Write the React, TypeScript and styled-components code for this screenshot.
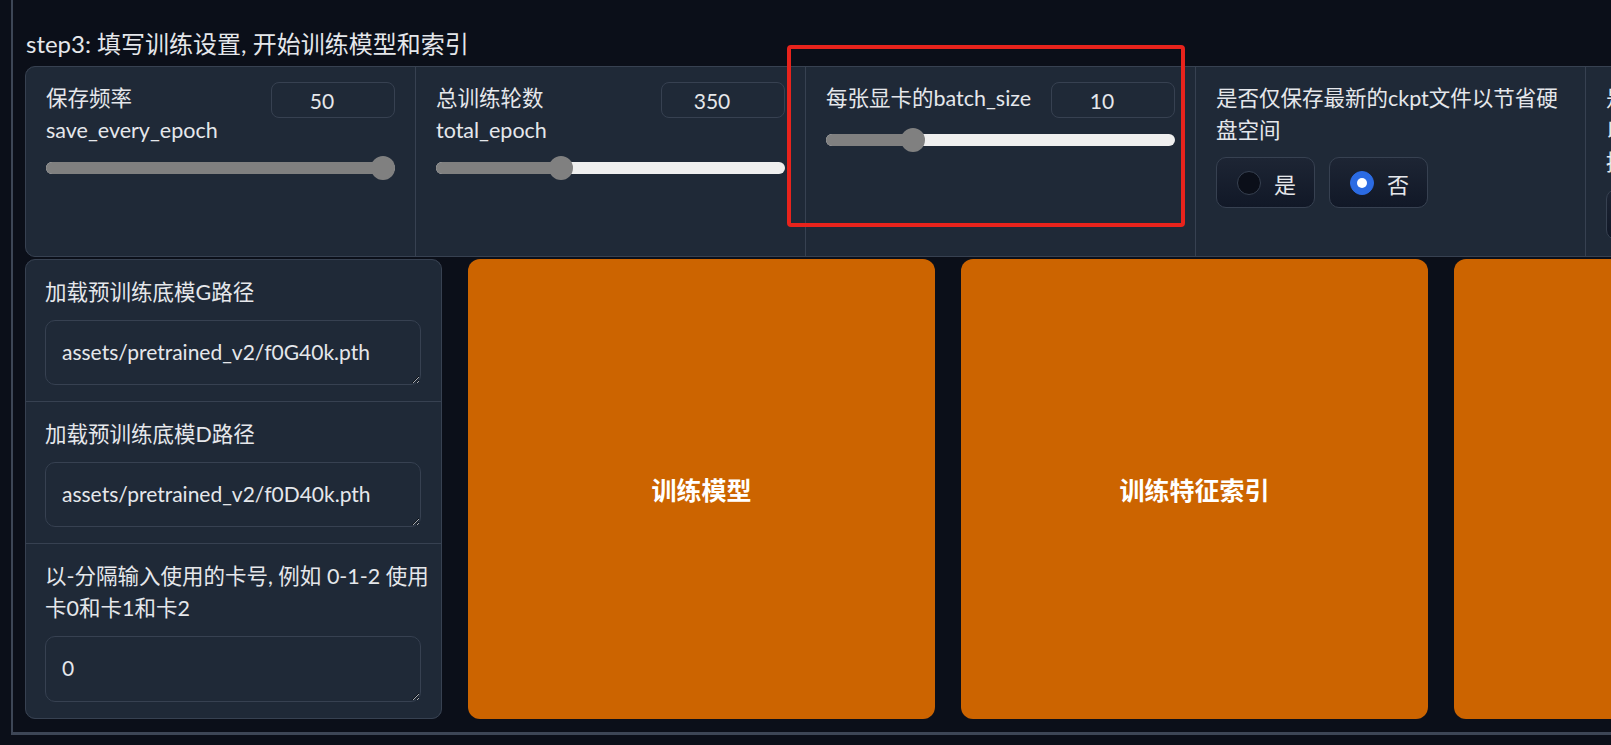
import * as React from 'react'
import styled, { createGlobalStyle } from 'styled-components'

const FONT = `Lato, "Noto Sans CJK SC", "Noto Sans", sans-serif`

const GlobalStyle = createGlobalStyle`
  html, body {
    margin: 0;
    padding: 0;
    background: #0b0f19;
    overflow: hidden;
  }
  body {
    font-family: ${FONT};
    color: #e5e7eb;
  }
`

const Page = styled.div`
  position: relative;
  width: 1611px;
  height: 745px;
`

// tab panel; its top and right edge lie outside the shot
const TabPanel = styled.div`
  margin-left: 11px;
  border-left: 2px solid #3d4656;
  border-bottom: 3px solid #3d4656;
  padding: 26px 0 13px 12px;
  display: flex;
  flex-direction: column;
  gap: 2px;
`

const Title = styled.div`
  font-size: 24px;
  line-height: 36px;
  margin: 0 0 2px 1px;
  color: #e5e7eb;
  white-space: nowrap;
`

const FormRow = styled.div`
  display: flex;
  gap: 1px;
  width: max-content;
  background: #374151;
  border: 1px solid #374151;
  border-radius: 10px;
  overflow: hidden;
`

const FormCell = styled.div`
  flex: none;
  width: 389px;
  box-sizing: border-box;
  padding: 15px 20px 16px;
  background: #1f2937;
  display: flex;
  flex-direction: column;
`

const SliderHead = styled.div`
  display: flex;
  justify-content: space-between;
  align-items: flex-start;
  gap: 16px;
`

const Label = styled.div<{ $nowrap?: boolean }>`
  font-size: 21.5px;
  line-height: 32px;
  color: #e5e7eb;
  white-space: ${p => (p.$nowrap ? 'nowrap' : 'normal')};
`

const NumberBox = styled.div`
  flex: none;
  width: 124px;
  height: 36px;
  box-sizing: border-box;
  border: 1px solid #374151;
  border-radius: 8px;
  padding-right: 22px;
  display: grid;
  place-items: center;
  font-size: 21px;
  color: #e5e7eb;
`

const Slider = styled.div`
  position: relative;
  height: 24px;
  margin-top: 10px;
`

const Track = styled.div`
  position: absolute;
  left: 0;
  right: 0;
  top: 6px;
  height: 12px;
  border-radius: 6px;
  background: #efefef;
  overflow: hidden;
`

const TrackFill = styled.div`
  height: 100%;
  background: #808080;
`

const Thumb = styled.div`
  position: absolute;
  top: 0;
  width: 24px;
  height: 24px;
  border-radius: 50%;
  background: #808080;
`

const RadioGroup = styled.div`
  display: flex;
  gap: 14px;
  margin-top: 11px;
`

const RadioOption = styled.label`
  flex: none;
  display: flex;
  align-items: center;
  gap: 13px;
  width: 99px;
  height: 51px;
  box-sizing: border-box;
  padding: 0 0 0 20px;
  border: 1px solid #374151;
  border-radius: 10px;
  background: linear-gradient(to bottom, #1d2534, #111827);
  font-size: 22px;
  color: #e5e7eb;
`

const RadioDot = styled.span<{ $checked: boolean }>`
  flex: none;
  width: 24px;
  height: 24px;
  box-sizing: border-box;
  border-radius: 50%;
  border: 1px solid ${p => (p.$checked ? '#2b6be3' : '#374151')};
  background: ${p => (p.$checked ? '#2b6be3' : '#0b0f19')};
  display: grid;
  place-items: center;
  &::after {
    content: '';
    width: 10px;
    height: 10px;
    border-radius: 50%;
    background: #ffffff;
    display: ${p => (p.$checked ? 'block' : 'none')};
  }
`

const ActionRow = styled.div`
  display: flex;
  gap: 26px;
  align-items: stretch;
`

const PathPanel = styled.div`
  flex: none;
  width: 417px;
  box-sizing: border-box;
  border: 1px solid #374151;
  border-radius: 10px;
  background: #374151;
  overflow: hidden;
  display: flex;
  flex-direction: column;
  gap: 1px;
`

const PathField = styled.div`
  background: #1f2937;
  padding: 16px 20px 16px 19px;
  display: flex;
  flex-direction: column;
  gap: 12px;
`

const TextArea = styled.textarea<{ $h: number }>`
  height: ${p => p.$h}px;
  box-sizing: border-box;
  width: 100%;
  margin: 0;
  padding: 15px 16px;
  border: 1px solid #374151;
  border-radius: 10px;
  background: #1f2937;
  color: #e5e7eb;
  font-family: ${FONT};
  font-size: 21px;
  line-height: 32px;
  resize: vertical;
  outline: none;
  color-scheme: dark;
  overflow: hidden;
`

const BigButton = styled.button`
  flex: none;
  width: 467px;
  border: none;
  border-radius: 12px;
  background: #cc6400;
  color: #ffffff;
  font-family: ${FONT};
  font-size: 25px;
  font-weight: 700;
`

// red marker that was drawn over the screenshot
const Marker = styled.div`
  position: absolute;
  left: 787px;
  top: 45px;
  width: 398px;
  height: 182px;
  box-sizing: border-box;
  border: 4px solid #e8231c;
  border-radius: 4px;
  pointer-events: none;
`

function RangeField(props: { label: string[]; value: number; min: number; max: number }) {
  const frac = (props.value - props.min) / (props.max - props.min)
  const single = props.label.length === 1
  return (
    <FormCell>
      <SliderHead>
        <Label $nowrap={single}>
          {props.label.map((l, i) => (
            <div key={i}>{l}</div>
          ))}
        </Label>
        <NumberBox>{props.value}</NumberBox>
      </SliderHead>
      <Slider>
        <Track>
          <TrackFill style={{ width: `calc(${frac} * (100% - 24px) + 12px)` }} />
        </Track>
        <Thumb style={{ left: `calc(${frac} * (100% - 24px))` }} />
      </Slider>
    </FormCell>
  )
}

function YesNoField(props: { label: string; yes: boolean }) {
  return (
    <FormCell>
      <Label>{props.label}</Label>
      <RadioGroup>
        <RadioOption>
          <RadioDot $checked={props.yes} />
          是
        </RadioOption>
        <RadioOption>
          <RadioDot $checked={!props.yes} />
          否
        </RadioOption>
      </RadioGroup>
    </FormCell>
  )
}

export default function App() {
  return (
    <Page>
      <GlobalStyle />
      <TabPanel>
        <Title>step3: 填写训练设置, 开始训练模型和索引</Title>
        <FormRow>
          <RangeField label={['保存频率', 'save_every_epoch']} value={50} min={1} max={50} />
          <RangeField label={['总训练轮数', 'total_epoch']} value={350} min={2} max={1000} />
          <RangeField label={['每张显卡的batch_size']} value={10} min={1} max={40} />
          <YesNoField label="是否仅保存最新的ckpt文件以节省硬盘空间" yes={false} />
          <YesNoField label="是否缓存所有训练集至显存. 10min以下小数据可缓存以加速训练, 大数据缓存会炸显存也加不了多少速" yes={false} />
        </FormRow>
        <ActionRow>
          <PathPanel>
            <PathField>
              <Label>加载预训练底模G路径</Label>
              <TextArea $h={65} readOnly defaultValue="assets/pretrained_v2/f0G40k.pth" />
            </PathField>
            <PathField>
              <Label>加载预训练底模D路径</Label>
              <TextArea $h={65} readOnly defaultValue="assets/pretrained_v2/f0D40k.pth" />
            </PathField>
            <PathField>
              <Label $nowrap>
                以-分隔输入使用的卡号, 例如 0-1-2 使用
                <br />
                卡0和卡1和卡2
              </Label>
              <TextArea $h={66} readOnly defaultValue="0" />
            </PathField>
          </PathPanel>
          <BigButton>训练模型</BigButton>
          <BigButton>训练特征索引</BigButton>
          <BigButton>一键训练</BigButton>
        </ActionRow>
      </TabPanel>
      <Marker />
    </Page>
  )
}
